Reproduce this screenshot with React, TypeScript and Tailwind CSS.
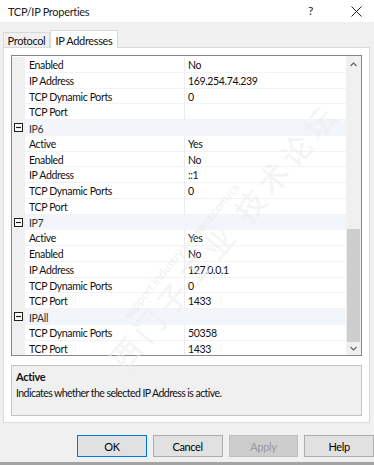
import React from "react";

type Row = { kind: "cat"; label: string } | { kind: "prop"; name: string; value: string };

const rows: Row[] = [
	{ kind: "prop", name: "Enabled", value: "No" },
	{ kind: "prop", name: "IP Address", value: "169.254.74.239" },
	{ kind: "prop", name: "TCP Dynamic Ports", value: "0" },
	{ kind: "prop", name: "TCP Port", value: "" },
	{ kind: "cat", label: "IP6" },
	{ kind: "prop", name: "Active", value: "Yes" },
	{ kind: "prop", name: "Enabled", value: "No" },
	{ kind: "prop", name: "IP Address", value: "::1" },
	{ kind: "prop", name: "TCP Dynamic Ports", value: "0" },
	{ kind: "prop", name: "TCP Port", value: "" },
	{ kind: "cat", label: "IP7" },
	{ kind: "prop", name: "Active", value: "Yes" },
	{ kind: "prop", name: "Enabled", value: "No" },
	{ kind: "prop", name: "IP Address", value: "127.0.0.1" },
	{ kind: "prop", name: "TCP Dynamic Ports", value: "0" },
	{ kind: "prop", name: "TCP Port", value: "1433" },
	{ kind: "cat", label: "IPAll" },
	{ kind: "prop", name: "TCP Dynamic Ports", value: "50358" },
	{ kind: "prop", name: "TCP Port", value: "1433" },
];

function CollapseBox() {
	return (
		<svg width="9" height="9" viewBox="0 0 9 9">
			<rect x="0.5" y="0.5" width="8" height="8" fill="#fff" stroke="#1e1e1e" />
			<line x1="2" y1="4.5" x2="7" y2="4.5" stroke="#1e1e1e" strokeWidth="1.2" />
		</svg>
	);
}

function Chevron({ up }: { up?: boolean }) {
	return (
		<svg width="7" height="5" viewBox="0 0 7 5">
			<path d={up ? "M0.5 4 L3.5 1 L6.5 4" : "M0.5 1 L3.5 4 L6.5 1"} fill="none" stroke="#606060" strokeWidth="1.1" />
		</svg>
	);
}

function GridRow({ row }: { row: Row }) {
	if (row.kind === "cat") {
		return (
			<div className="flex h-[15.75px] shrink-0">
				<div className="flex w-[13px] items-center justify-center bg-[#f0f0f0]">
					<CollapseBox />
				</div>
				<div className="flex flex-1 items-center whitespace-nowrap bg-[#f2f5fa] pl-[4px] pt-[2px] text-[#333]">{row.label}</div>
			</div>
		);
	}
	return (
		<div className="flex h-[15.75px] shrink-0">
			<div className="w-[13px] bg-[#f0f0f0]" />
			<div className="flex w-[159px] items-center whitespace-nowrap border-b border-[#f3f3f3] pl-[4px] pt-[2px]">{row.name}</div>
			<div className="w-px bg-[#ececec]" />
			<div className="flex flex-1 items-center whitespace-nowrap border-b border-[#f3f3f3] pl-[3px] pt-[2px]">{row.value}</div>
		</div>
	);
}

function Btn({ label, primary, disabled }: { label: string; primary?: boolean; disabled?: boolean }) {
	return (
		<div
			className={
				"flex h-[22px] w-[70px] items-center justify-center border pt-[1px] text-[11px] " +
				(disabled
					? "border-[#bfbfbf] bg-[#cccccc] text-[#9a9a9a]"
					: primary
						? "border-[#0078d7] bg-[#e1e1e1] text-black"
						: "border-[#adadad] bg-[#e1e1e1] text-black")
			}
		>
			{label}
		</div>
	);
}

export default function App() {
	return (
		<div className="relative flex h-[465px] w-[374px] flex-col overflow-hidden bg-[#f0f0f0] text-[10.5px] leading-none tracking-[-0.35px] text-[#111] [font-family:Lato,'Noto_Sans',sans-serif]">
			{/* Title bar */}
			<div className="flex h-[22px] shrink-0 items-center bg-white pl-[8px]">
				<span className="flex-1 text-[11px] tracking-[-0.3px] text-[#222]">TCP/IP Properties</span>
				<span className="mr-[38px] text-[12px] text-[#222]">?</span>
				<svg width="11" height="11" viewBox="0 0 11 11" className="mr-[12px]">
					<path d="M0.5 0.5 L10.5 10.5 M10.5 0.5 L0.5 10.5" stroke="#222" strokeWidth="1" />
				</svg>
			</div>

			{/* Tabs */}
			<div className="mt-[8px] flex h-[17px] shrink-0 items-end pl-[3px] text-[11px]">
				<div className="flex h-[15px] w-[47px] items-center justify-center whitespace-nowrap border border-b-0 border-[#d9d9d9] bg-[#f0f0f0] pt-[1px]">
					Protocol
				</div>
				<div className="relative z-10 -mb-px flex h-[18px] w-[68px] items-center justify-center whitespace-nowrap border border-b-0 border-[#d9d9d9] bg-white pt-[1px]">
					IP Addresses
				</div>
			</div>

			{/* Tab panel */}
			<div className="ml-[3px] flex h-[376px] w-[367px] shrink-0 flex-col border border-[#d9d9d9] bg-white px-[7px] pt-[7px]">
				{/* Property grid */}
				<div className="flex h-[301px] shrink-0 border border-[#828790]">
					<div className="flex flex-1 flex-col overflow-hidden pt-[1px]">
						{rows.map((r, i) => (
							<GridRow key={i} row={r} />
						))}
					</div>
					<div className="flex w-[15px] flex-col bg-[#f0f0f0]">
						<div className="flex h-[16px] items-center justify-center">
							<Chevron up />
						</div>
						<div className="h-[157px]" />
						<div className="mx-[1px] h-[113px] bg-[#cdcdcd]" />
						<div className="flex flex-1 items-center justify-center">
							<Chevron />
						</div>
					</div>
				</div>

				{/* Description */}
				<div className="mt-[9px] flex h-[51px] shrink-0 flex-col border border-[#c4c4c4] bg-[#f0f0f0] px-[4px] pt-[5px]">
					<span className="text-[11px] font-bold tracking-[-0.3px]">Active</span>
					<span className="mt-[6px] text-[10.5px] tracking-[-0.55px]">Indicates whether the selected IP Address is active.</span>
				</div>
			</div>

			{/* Buttons */}
			<div className="mt-[12px] flex shrink-0 gap-[6px] pl-[77px]">
				<Btn label="OK" primary />
				<Btn label="Cancel" />
				<Btn label="Apply" disabled />
				<Btn label="Help" />
			</div>

			<div className="mt-auto h-[3px] shrink-0 bg-[#a3a3a3]" />

			{/* Watermark */}
			<div className="pointer-events-none absolute left-[55px] top-[220px] -rotate-[50deg] select-none whitespace-nowrap text-[30px] tracking-[6px] text-[#ededed] opacity-60 [font-family:'Noto_Sans_CJK_SC',sans-serif]">
				西门子工业 技术论坛
			</div>
			<div className="pointer-events-none absolute left-[95px] top-[245px] -rotate-[50deg] select-none whitespace-nowrap text-[12px] tracking-normal text-[#e8e8e8] opacity-60">
				support.industry.siemens.com/cs
			</div>
		</div>
	);
}
